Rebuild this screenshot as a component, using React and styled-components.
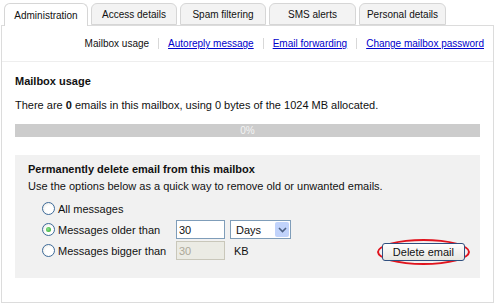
import React, { useState } from 'react';
import styled, { createGlobalStyle } from 'styled-components';

const GlobalStyle = createGlobalStyle`
  html, body { margin: 0; padding: 0; background: #fff; }
  body { font-family: Tahoma, "Liberation Sans", Arial, sans-serif; color: #111; }
`;

const tabs = [
  { label: 'Administration', width: 84 },
  { label: 'Access details', width: 86 },
  { label: 'Spam filtering', width: 86 },
  { label: 'SMS alerts', width: 87 },
  { label: 'Personal details', width: 87 },
];
const links = ['Mailbox usage', 'Autoreply message', 'Email forwarding', 'Change mailbox password'];

export default function App() {
  const [period, setPeriod] = useState('older');
  return (
    <Page>
      <GlobalStyle />
      <TabRow>
        {tabs.map((t, i) => (
          <Tab key={t.label} active={i === 0} w={t.width}>{t.label}</Tab>
        ))}
      </TabRow>
      <Panel>
        <SubNav>
          {links.map((l, i) => (
            <SubLink key={l} current={i === 0}>{l}</SubLink>
          ))}
        </SubNav>
        <Content>
          <Heading>Mailbox usage</Heading>
          <Text>There are <b>0</b> emails in this mailbox, using 0 bytes of the 1024 MB allocated.</Text>
          <Bar>0%</Bar>
          <DeleteBox>
            <BoxTitle>Permanently delete email from this mailbox</BoxTitle>
            <BoxText>Use the options below as a quick way to remove old or unwanted emails.</BoxText>
            <Options>
              <OptionLabel>
                <Radio name="p" checked={period === 'all'} onChange={() => setPeriod('all')} />
                All messages
              </OptionLabel>
              <span />
              <span />
              <OptionLabel>
                <Radio name="p" checked={period === 'older'} onChange={() => setPeriod('older')} />
                Messages older than
              </OptionLabel>
              <Field defaultValue="30" />
              <Select>
                <span>Days</span>
                <Arrow>
                  <svg width="9" height="6" viewBox="0 0 9 6"><path d="M1 1l3.5 3.5L8 1" stroke="#4d6185" strokeWidth="1.6" fill="none" /></svg>
                </Arrow>
              </Select>
              <OptionLabel>
                <Radio name="p" checked={period === 'bigger'} onChange={() => setPeriod('bigger')} />
                Messages bigger than
              </OptionLabel>
              <Field defaultValue="30" disabled />
              <Unit>KB</Unit>
            </Options>
            <ButtonRing>
              <DeleteButton>Delete email</DeleteButton>
            </ButtonRing>
          </DeleteBox>
        </Content>
      </Panel>
    </Page>
  );
}

const Page = styled.div`
  width: 496px;
  height: 305px;
  padding: 3px 2px 0 1px;
  box-sizing: border-box;
  background: #fff;
`;

const TabRow = styled.div`
  display: flex;
  gap: 3px;
  padding-left: 3px;
  height: 22px;
  position: relative;
  z-index: 1;
`;

const Tab = styled.div`
  box-sizing: border-box;
  flex: none;
  width: ${p => p.w}px;
  height: ${p => (p.active ? '23px' : '22px')};
  display: flex;
  align-items: center;
  justify-content: center;
  white-space: nowrap;
  font-size: 10px;
  color: #111;
  background: ${p => (p.active ? '#fff' : '#f3f3f3')};
  border: 1px solid #d6d6d6;
  border-bottom: ${p => (p.active ? 'none' : '1px solid #d6d6d6')};
  border-radius: 6px 6px 0 0;
`;

const Panel = styled.div`
  box-sizing: border-box;
  height: 278px;
  border: 1px solid #dcdcdc;
`;

const SubNav = styled.div`
  display: flex;
  justify-content: flex-end;
  align-items: center;
  height: 35px;
  padding-right: 0;
  border-bottom: 1px solid #eeeeee;
`;

const SubLink = styled.span`
  font-size: 10px;
  padding: 0 9px;
  white-space: nowrap;
  color: ${p => (p.current ? '#111' : '#0000cc')};
  text-decoration: ${p => (p.current ? 'none' : 'underline')};
  & + & { border-left: 1px solid #d8d8d8; }
`;

const Content = styled.div`
  padding: 12px 13px 0 13px;
`;

const Heading = styled.div`
  font-size: 11px;
  font-weight: bold;
  line-height: 14px;
`;

const Text = styled.div`
  font-size: 11px;
  line-height: 14px;
  margin-top: 10px;
`;

const Bar = styled.div`
  margin-top: 12px;
  height: 13px;
  background: #cccccc;
  color: #f4f4f4;
  font-size: 10px;
  line-height: 13px;
  text-align: center;
`;

const DeleteBox = styled.div`
  position: relative;
  margin-top: 18px;
  height: 123px;
  box-sizing: border-box;
  background: #f1f1f1;
  padding: 7px 13px;
`;

const BoxTitle = styled.div`
  font-size: 11px;
  font-weight: bold;
  line-height: 14px;
`;

const BoxText = styled.div`
  font-size: 11px;
  line-height: 14px;
  margin-top: 3px;
`;

const Options = styled.div`
  display: grid;
  grid-template-columns: 134px 54px auto;
  row-gap: 2px;
  align-items: center;
  margin-top: 6px;
  padding-left: 14px;
`;

const OptionLabel = styled.label`
  display: flex;
  align-items: center;
  gap: 3px;
  font-size: 11px;
  height: 19px;
  white-space: nowrap;
`;

const Radio = styled.input.attrs({ type: 'radio' })`
  appearance: none;
  margin: 0;
  width: 13px;
  height: 13px;
  box-sizing: border-box;
  border: 1px solid #3d6a99;
  border-radius: 50%;
  background: radial-gradient(circle at 60% 60%, #ffffff 40%, #e4e4de 100%);
  display: grid;
  place-items: center;
  &:checked::after {
    content: '';
    width: 5px;
    height: 5px;
    border-radius: 50%;
    background: radial-gradient(circle at 40% 40%, #8fe28f, #21a121);
  }
`;

const Field = styled.input`
  box-sizing: border-box;
  width: 49px;
  height: 19px;
  border: 1px solid #7f9db9;
  background: #fff;
  font: 11px Tahoma, "Liberation Sans", Arial, sans-serif;
  padding: 0 2px;
  color: #111;
  &:disabled {
    background: #ebebe4;
    border-color: #c9c7ba;
    color: #aca899;
  }
`;

const Select = styled.div`
  box-sizing: border-box;
  width: 61px;
  height: 19px;
  border: 1px solid #7f9db9;
  background: #fff;
  display: flex;
  align-items: center;
  justify-content: space-between;
  font-size: 11px;
  padding: 0 1px 0 5px;
`;

const Arrow = styled.span`
  width: 14px;
  height: 15px;
  background: #c1d3fb;
  border-radius: 2px;
  display: flex;
  align-items: center;
  justify-content: center;
`;

const Unit = styled.span`
  font-size: 11px;
  padding-left: 4px;
`;

const ButtonRing = styled.div`
  position: absolute;
  right: 10px;
  bottom: 13px;
  padding: 2px 3px;
  border: 2px solid #e0141e;
  border-radius: 50%;
`;

const DeleteButton = styled.button`
  display: block;
  font: 11px Tahoma, "Liberation Sans", Arial, sans-serif;
  color: #111;
  height: 18px;
  padding: 0 10px;
  background: linear-gradient(#ffffff, #e6e6e0);
  border: 1px solid #2f4f7f;
  border-radius: 3px;
`;
